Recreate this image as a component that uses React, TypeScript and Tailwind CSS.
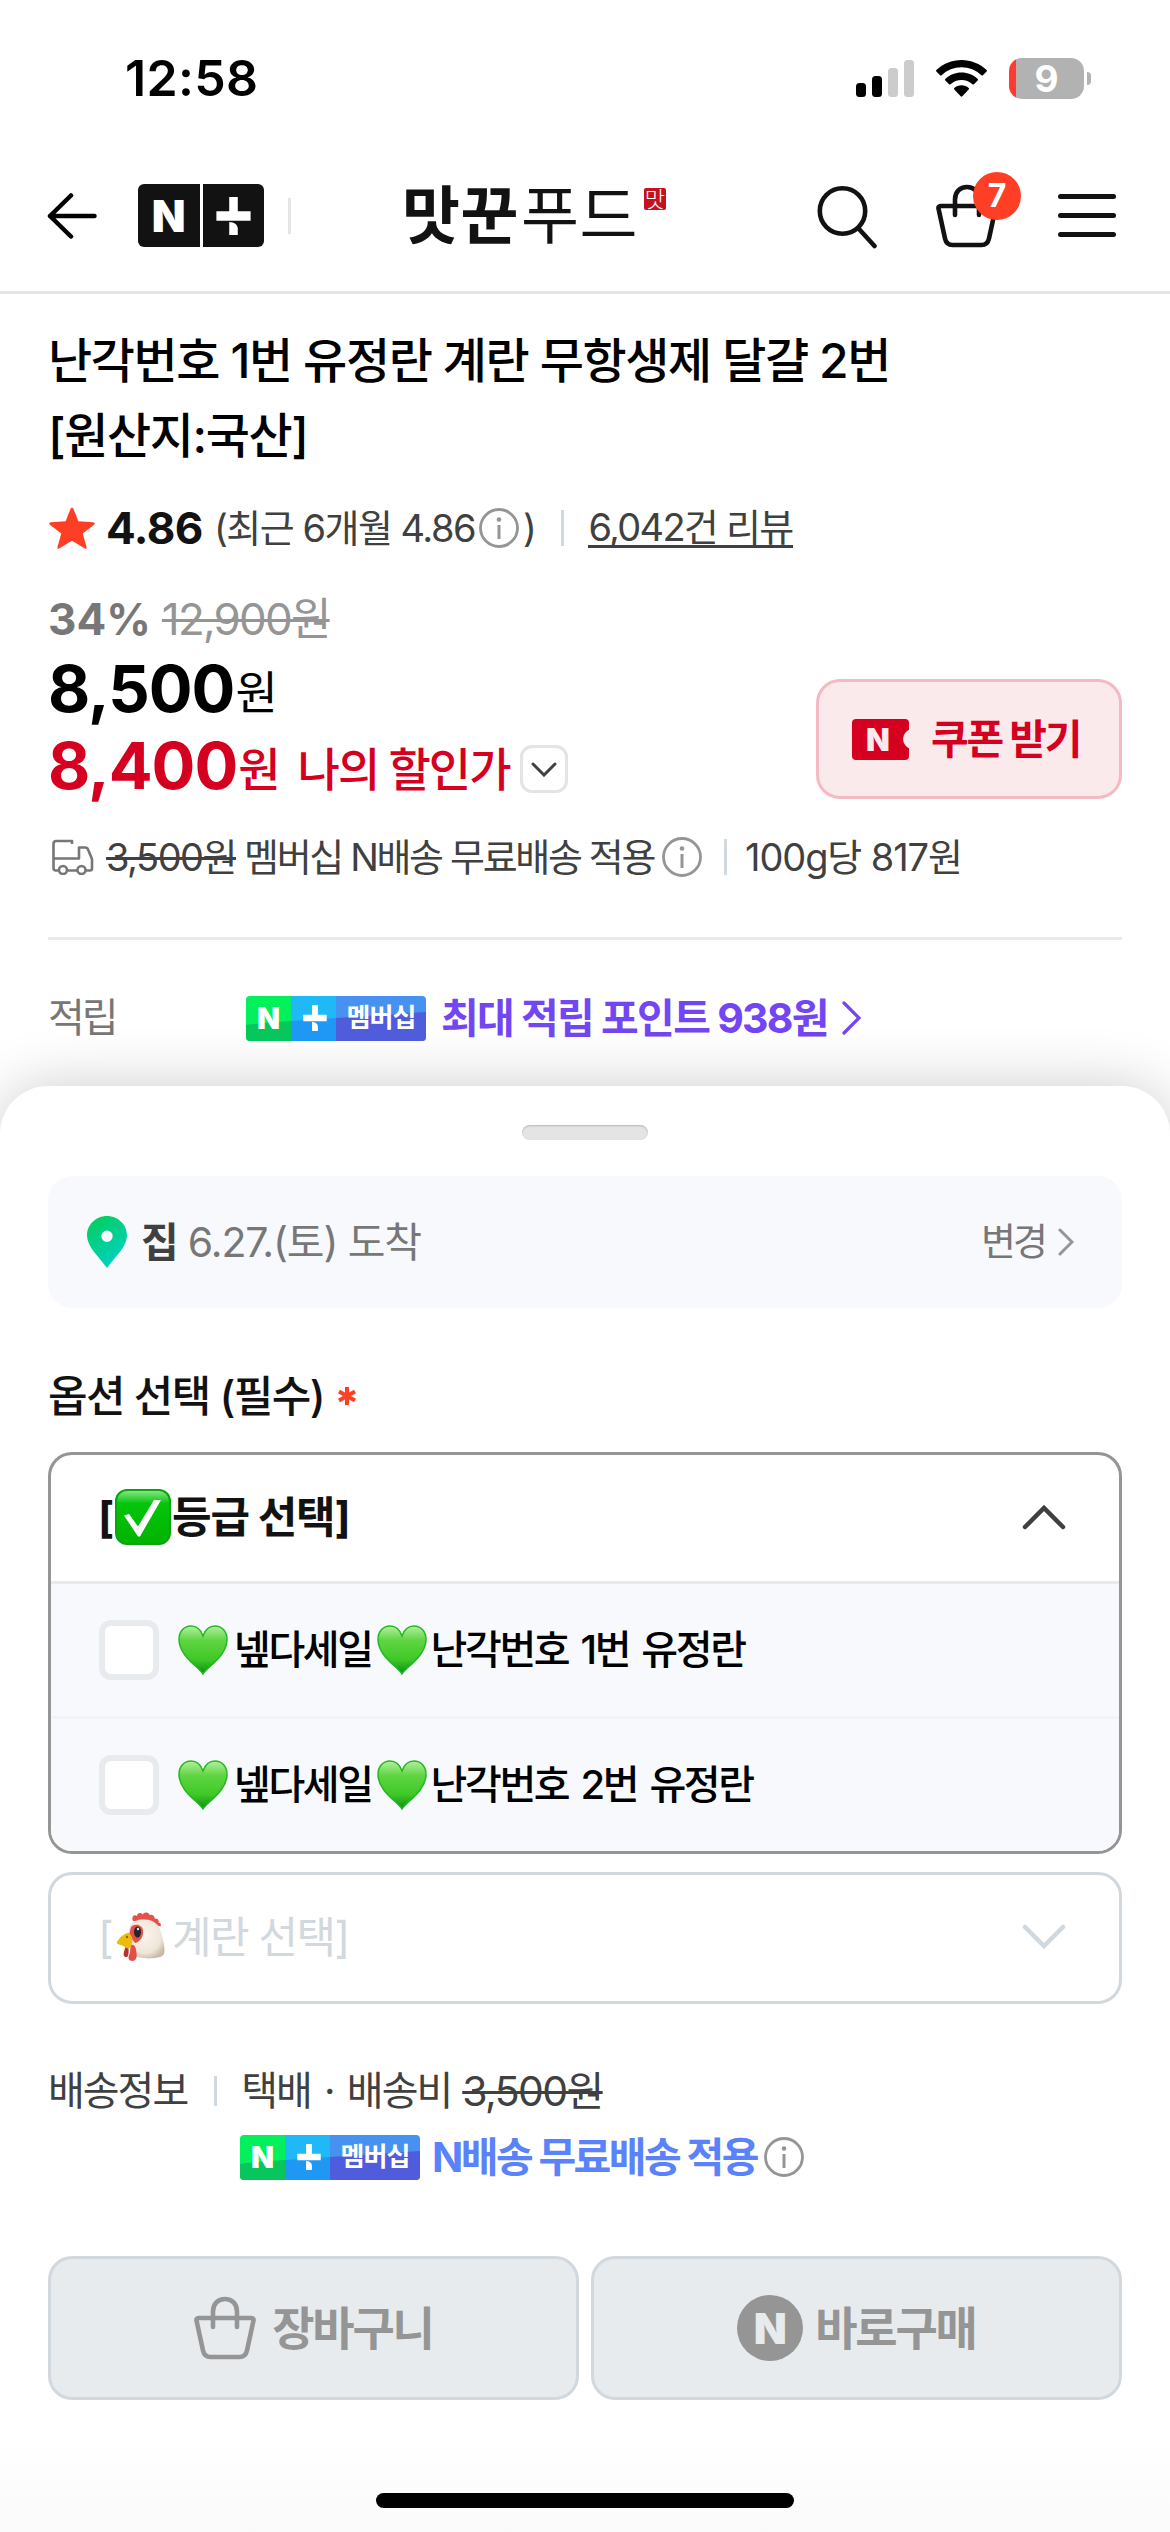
import React from 'react';

const InfoIcon = ({ className = '' }: { className?: string }) => (
  <svg viewBox="0 0 40 40" fill="none" className={`h-10 w-10 shrink-0 ${className}`}>
    <circle cx="20" cy="20" r="18.5" stroke="#959595" strokeWidth="2.8" />
    <circle cx="20" cy="11.5" r="2.3" fill="#959595" />
    <path d="M20 17v14" stroke="#959595" strokeWidth="3" />
  </svg>
);

const PlusMark = ({ className = '' }: { className?: string }) => (
  <svg viewBox="0 0 36 40" fill="#fff" className={className}>
    <path d="M13.5 0h9v15H36v10H0V15h13.5z" />
    <path d="M13.5 26.300c5 .2 8.600 2.300 9 6.700v7h-9z" />
  </svg>
);

const BagIcon = ({ className = '' }: { className?: string }) => (
  <svg viewBox="0 0 62 64" fill="none" stroke="currentColor" strokeWidth="4.600" strokeLinecap="round" strokeLinejoin="round" className={className}>
    <path d="M4.500 22h53a2 2 0 0 1 2 2.500l-6.500 30c-1 4.600-3.500 6.500-7.500 6.500h-29c-4 0-6.500-1.900-7.500-6.500l-6.500-30a2 2 0 0 1 2-2.500z" />
    <path d="M19 31V15.500C19 8 24 3 31 3s12 5 12 12.500V31" />
  </svg>
);

const GreenHeart = () => (
  <svg viewBox="0 0 50 50" className="h-[50px] w-[50px] shrink-0">
    <defs>
      <linearGradient id="heart" x1="0" y1="0" x2="0" y2="1">
        <stop offset="0" stopColor="#b4f09d" />
        <stop offset=".3" stopColor="#5fd543" />
        <stop offset=".7" stopColor="#3fc826" />
        <stop offset="1" stopColor="#0a8f14" />
      </linearGradient>
    </defs>
    <path
      d="M25 49C21 42 1 31 1 14.500 1 6 6.500 1 13 1c6 0 10 4 12 10C27 5 31 1 37 1c6.500 0 12 5 12 13.500C49 31 29 42 25 49z"
      fill="url(#heart)"
      stroke="#22b822"
      strokeWidth="1.500"
    />
  </svg>
);

const CheckEmoji = () => (
  <svg viewBox="0 0 56 56" className="ml-[2px] h-14 w-14 shrink-0">
    <defs>
      <linearGradient id="check" x1="0" y1="0" x2="0" y2="1">
        <stop offset="0" stopColor="#8fe68c" />
        <stop offset=".25" stopColor="#04c50c" />
        <stop offset="1" stopColor="#00b300" />
      </linearGradient>
    </defs>
    <rect x="1" y="1" width="54" height="54" rx="11" fill="url(#check)" stroke="#0aa50f" strokeWidth="2" />
    <path d="M9 26.500l5-1.500 9 12.500L39 11h7L25 47.500h-2z" fill="#fff" />
  </svg>
);

const ChickenEmoji = () => (
  <svg viewBox="0 0 50 50" className="ml-[4px] h-[50px] w-[50px] shrink-0">
    <defs>
      <radialGradient id="hen" cx=".45" cy=".4" r=".65">
        <stop offset="0" stopColor="#fbf5ee" />
        <stop offset=".7" stopColor="#efe6da" />
        <stop offset="1" stopColor="#c9b9a4" />
      </radialGradient>
    </defs>
    <path d="M17 9c-2-4 1-7 4-5 0-3 4-4 5.500-1.500C29-.5 33 0 33.500 3c3-1 5.500 1 5 3.500 3-.5 5 1.500 4 4 2 0 3 2 2 4L30 10z" fill="#e5504b" />
    <path d="M13 17C15 9 21 7.500 28 7.500c12 0 16 7 18 16 2 9 4 17 1 20-4 3.500-25 4.500-29-1-4-5-7-17-5-25.500z" fill="url(#hen)" />
    <path d="M15 15c4-4 11-2 12 3 1 6-3 12-8 13l-6-8z" fill="#e25049" />
    <ellipse cx="21.500" cy="20" rx="3.500" ry="5.500" fill="#23262c" />
    <circle cx="22" cy="17" r="1.200" fill="#dfe6ee" />
    <path d="M11 33c2 0 2.500 11 0 12-3 .5-4-2-3-5s1.500-7 3-7z" fill="#b5322f" />
    <path d="M15 33c4-1 5 3 5.500 8 .8 5-1 8-4 8-4 0-5-3-3-7 1-3 .5-6 1.500-9z" fill="#e25049" />
    <path d="M1 30c2-4 8-10 12-9 3 2 5 8 2 13-1 3-4 3-6 1-4-3-9-2-8-5z" fill="#edbb0b" />
    <circle cx="11" cy="25" r="1.200" fill="#8a6a00" />
  </svg>
);

const MembershipBadge = () => (
  <div className="relative flex h-[45px] w-[180px] shrink-0 overflow-hidden rounded-[4px]">
    <svg viewBox="0 0 180 45" className="absolute inset-0 h-full w-full">
      <path d="M0 0h45v45H0z" fill="#03f05c" />
      <path d="M45 0h45v45H45z" fill="#20b9f7" />
      <path d="M90 0h90v45H90z" fill="#4791f1" />
      <path d="M0 29c15-2 30-3 45-4v20H0z" fill="#06c65c" />
      <path d="M45 25l45-3v23H45z" fill="#1f97f5" />
      <path d="M90 22c30-2 60-4 90-6v29H90z" fill="#4f5cdb" />
    </svg>
    <div className="relative flex w-[45px] items-center justify-center text-[30px] leading-none font-black tracking-normal text-white">N</div>
    <div className="relative flex w-[45px] items-center justify-center">
      <PlusMark className="ml-[2px] h-[26px] w-[26px]" />
    </div>
    <div className="relative flex w-[90px] items-center justify-center text-[26px] leading-none font-bold tracking-[-1px] text-white">멤버십</div>
  </div>
);

const options = ['난각번호 1번 유정란', '난각번호 2번 유정란'];

const StatusBar = () => (
  <div className="flex h-[140px] shrink-0 items-center justify-between pt-4 pr-[79px] pl-[125px]">
    <span className="text-[50px] leading-none font-semibold tracking-[0.3px] text-black">12:58</span>
    <div className="flex items-center">
      <svg viewBox="0 0 58 37" className="h-[37px] w-[58px]">
        <rect y="23" width="10" height="14" rx="3.500" />
        <rect x="16" y="16" width="10" height="21" rx="3.500" />
        <rect x="32" y="8" width="10" height="29" rx="3.500" fill="#ccc" />
        <rect x="48" width="10" height="37" rx="3.500" fill="#ccc" />
      </svg>
      <svg viewBox="0 0 51 37" className="ml-[22px] h-[37px] w-[51px]">
        <path d="M25.500 0C35 0 44 3.700 50.600 10c.5.500.5 1 0 1.500l-3.700 3.800c-.5.500-1 .5-1.500 0C40 10.200 33 7.300 25.500 7.300S11 10.200 5.600 15.300c-.5.500-1 .5-1.500 0L.4 11.500c-.5-.5-.5-1 0-1.500C7 3.700 16 0 25.500 0z" />
        <path d="M25.500 12.600c6.200 0 11.900 2.400 16.200 6.300.5.500.5 1 0 1.500l-3.800 3.800c-.4.500-1 .5-1.400 0-3-2.600-6.800-4.200-11-4.200s-8 1.600-11 4.200c-.4.500-1 .5-1.400 0l-3.800-3.800c-.5-.5-.5-1 0-1.500 4.300-3.900 10-6.300 16.200-6.300z" />
        <path d="M25.500 25.300c2.800 0 5.300 1 7.200 2.600.5.500.5 1 0 1.500l-6.400 6.900c-.5.500-1.100.5-1.600 0l-6.400-6.900c-.5-.5-.5-1 0-1.500 1.900-1.600 4.400-2.600 7.200-2.600z" />
      </svg>
      <div className="ml-[22px] flex h-[41px] w-[75px] items-center justify-center rounded-[13px] bg-[linear-gradient(90deg,#ff3b30_7px,#b2b2b2_7px)]">
        <span className="text-[37px] leading-[41px] font-bold text-white">9</span>
      </div>
      <div className="ml-[3px] h-[13px] w-[4px] rounded-r-full bg-[#b2b2b2]" />
    </div>
  </div>
);

const Header = () => (
  <header className="flex h-[154px] shrink-0 items-center border-b-[3px] border-[#e5e5e5] pr-[54px] pl-[47px]">
    <svg viewBox="0 0 50 46" fill="none" stroke="#000" strokeWidth="4.500" strokeLinecap="round" strokeLinejoin="round" className="h-[46px] w-[50px]">
      <path d="M24 2.500L3 23l21 20.500M3 23h44.500" />
    </svg>
    <div className="ml-[41px] flex h-[63px] w-[126px] gap-[3px] text-white">
      <div className="flex flex-1 items-center justify-center rounded-l-[6px] bg-[#121212] text-[44px] leading-none font-black">N</div>
      <div className="flex flex-1 items-center justify-center rounded-r-[6px] bg-[#121212]">
        <PlusMark className="h-[38px] w-[35px]" />
      </div>
    </div>
    <div className="ml-6 h-9 w-[3px] bg-[#e5e5e5]" />
    <div className="ml-[111px] flex items-center whitespace-nowrap text-[63px] leading-none tracking-[0.5px] text-[#121212]">
      <span className="font-bold">맛꾼</span>
      <span className="ml-[2px] font-normal">푸드</span>
    </div>
    <div className="mb-[33px] ml-[6px] flex h-[22px] w-[22px] items-center justify-center rounded-[2px] bg-[#c4121f] text-[22px] leading-[22px] font-light text-white">
      맛
    </div>
    <div className="ml-auto flex items-center">
      <svg viewBox="0 0 60 68" fill="none" stroke="#121212" strokeWidth="4.600" strokeLinecap="round" className="h-[68px] w-[60px]">
        <circle cx="25.500" cy="29" r="22.700" />
        <path d="M42 47l15.500 17" />
      </svg>
      <div className="relative ml-[59px] h-16 w-[62px] text-[#121212]">
        <BagIcon className="h-16 w-[62px]" />
        <div className="absolute -top-3 left-[37px] flex h-12 w-12 items-center justify-center rounded-full bg-[#ff3e26] text-[32px] leading-none font-bold text-white">7</div>
      </div>
      <div className="ml-[60px] flex w-[58px] flex-col gap-[14px]">
        <div className="h-[5px] rounded-full bg-[#121212]" />
        <div className="h-[5px] rounded-full bg-[#121212]" />
        <div className="h-[5px] rounded-full bg-[#121212]" />
      </div>
    </div>
  </header>
);

const ProductInfo = () => (
  <section className="shrink-0 px-12">
    <h1 className="pt-[29px] text-[48px] leading-[75px] font-medium tracking-[-1.400px] whitespace-nowrap text-black">
      난각번호 1번 유정란 계란 무항생제 달걀 2번
      <br />
      [원산지:국산]
    </h1>

    <div className="mt-[29px] flex h-[52px] items-center text-[38px] leading-none tracking-[-1.500px] whitespace-nowrap text-[#404040]">
      <svg viewBox="0 0 46 42" fill="#ff3e26" className="ml-px h-[46px] w-[46px]">
        <path d="M23 .8c.7 0 1.200.5 1.500 1.200l4.900 12.300 14.800 1c1.600.1 2 1.500.9 2.500L33.700 26.600l3.800 13.200c.4 1.600-.7 2.400-2 1.500L23 33.800l-12.500 7.500c-1.300.9-2.400.1-2-1.500l3.800-13.200L.9 17.800c-1.100-1-.7-2.400.9-2.500l14.800-1L21.500 2c.3-.7.8-1.200 1.500-1.200z" />
      </svg>
      <span className="ml-[11px] text-[44px] font-bold tracking-[-0.500px] text-[#121212]">4.86</span>
      <span className="ml-[11px]">(최근 6개월 4.86</span>
      <InfoIcon className="ml-[4px]" />
      <span className="ml-[4px]">)</span>
      <div className="ml-[26px] h-9 w-[3px] bg-[#d1d8de]" />
      <a className="ml-6 border-b-[3px] border-[#404040] leading-[36px] tracking-[-1.700px]">6,042건 리뷰</a>
    </div>

    <div className="flex justify-between">
      <div>
        <div className="mt-[39px] flex h-[52px] items-center text-[44px] leading-none whitespace-nowrap">
          <span className="font-bold text-[#777]">34%</span>
          <span className="ml-[11px] tracking-[-1.800px] text-[#959595] line-through decoration-[3px]">12,900원</span>
        </div>
        <div className="mt-[10px] flex h-[68px] items-baseline whitespace-nowrap text-black">
          <span className="text-[65px] leading-[68px] font-bold tracking-[-1px]">8,500</span>
          <span className="ml-px -translate-y-[3px] text-[46px] leading-none">원</span>
        </div>
        <div className="mt-[9px] flex h-[68px] items-baseline whitespace-nowrap text-[#d5001f]">
          <span className="text-[65px] leading-[68px] font-bold tracking-[-1px]">8,400</span>
          <span className="ml-px -translate-y-[3px] text-[46px] leading-none font-medium">원</span>
          <span className="ml-[17px] -translate-y-[3px] text-[46px] leading-none font-medium tracking-[-2px]">나의 할인가</span>
          <div className="mt-[6px] ml-[11px] flex h-12 w-12 items-center justify-center self-center rounded-[12px] border-[3px] border-[#e4e4e4]">
            <svg viewBox="0 0 26 15" fill="none" stroke="#404040" strokeWidth="3" strokeLinecap="round" className="h-[15px] w-[26px]">
              <path d="M2 2l11 11L24 2" />
            </svg>
          </div>
        </div>
      </div>
      <div className="mt-[125px] flex h-[120px] w-[306px] items-center rounded-[24px] border-[3px] border-[#f5b9c3] bg-[#fbeaec] pl-[33px] text-[#d5001f]">
        <div className="relative flex h-[41px] w-[57px] items-center overflow-hidden rounded-[4px] bg-[#d5001f] pl-[14px] text-[31px] leading-none font-black text-[#fbeaec]">
          N
          <div className="absolute top-[10px] -right-[14px] h-5 w-5 rounded-full bg-[#fbeaec]" />
        </div>
        <span className="ml-[22px] text-[41px] leading-none font-bold tracking-[-2.300px] whitespace-nowrap">쿠폰 받기</span>
      </div>
    </div>

    <div className="mt-[31px] flex h-[52px] items-center text-[38px] leading-none tracking-[-1.500px] whitespace-nowrap text-[#404040]">
      <svg viewBox="0 0 42 36" fill="none" stroke="#777" strokeWidth="2.600" strokeLinejoin="round" className="ml-[4px] h-[36px] w-[42px]">
        <path d="M20 5V2H4a2.500 2.500 0 0 0-2.500 2.500V29a2.500 2.500 0 0 0 2.500 2.500h3M15 31.500h10M34 31.500h4a2 2 0 0 0 2-2V20l-4-9.500a3 3 0 0 0-3-2h-6V19.500H1.500" />
        <circle cx="11" cy="31" r="4" />
        <circle cx="29.500" cy="31" r="4" />
      </svg>
      <span className="ml-[12px] line-through decoration-[3px]">3,500원</span>
      <span className="ml-2 tracking-[-2.350px]">멤버십 N배송 무료배송 적용</span>
      <InfoIcon className="ml-[8px]" />
      <div className="ml-[22px] h-9 w-[3px] bg-[#d1d8de]" />
      <span className="ml-[18px] tracking-[-1.100px]">100g당 817원</span>
    </div>

    <div className="mt-[54px] h-[3px] bg-[#e8ebee]" />

    <div className="mt-[50px] flex h-[56px] items-center text-[41px] leading-none tracking-[-1.700px] whitespace-nowrap">
      <span className="w-[198px] text-[40px] tracking-[-3px] text-[#777]">적립</span>
      <MembershipBadge />
      <span className="ml-[15px] font-bold text-[#7346f3]">최대 적립 포인트 938원</span>
      <svg viewBox="0 0 20 36" fill="none" stroke="#7346f3" strokeWidth="3.200" strokeLinecap="round" className="ml-[14px] h-9 w-5">
        <path d="M2 3l15 15L2 33" />
      </svg>
    </div>
  </section>
);

const OptionSheet = () => (
  <section className="mt-10 flex flex-1 flex-col rounded-t-[48px] bg-white px-12 shadow-[0_0_60px_rgba(0,0,0,0.2)]">
    <div className="mx-auto mt-[39px] h-[15px] w-[126px] rounded-full bg-[#e4e4e4] shadow-[inset_0_1px_2px_rgba(0,0,0,0.2)]" />

    <div className="mt-9 flex h-[132px] items-center rounded-[24px] bg-[#f7f9fd] pr-12 pl-[39px] leading-none whitespace-nowrap text-[#777]">
      <svg viewBox="0 0 40 52" className="h-[52px] w-10">
        <defs>
          <linearGradient id="pin" x1=".2" y1="0" x2=".7" y2="1">
            <stop offset="0" stopColor="#03cf5d" />
            <stop offset="1" stopColor="#00d1c7" />
          </linearGradient>
        </defs>
        <path fillRule="evenodd" d="M20 0c11 0 20 8.500 20 19.500C40 31 27 42 20 52 13 42 0 31 0 19.500 0 8.500 9 0 20 0zm0 14.500a5.700 5.700 0 1 0 0 11.400 5.700 5.700 0 0 0 0-11.400z" fill="url(#pin)" />
      </svg>
      <span className="ml-[14px] text-[41px] font-bold text-[#404040]">집</span>
      <span className="ml-[9px] text-[41px] tracking-[-1.100px]">6.27.(토) 도착</span>
      <span className="ml-auto pb-[2px] text-[38px] tracking-[-3px]">변경</span>
      <svg viewBox="0 0 16 28" fill="none" stroke="#959595" strokeWidth="3" strokeLinecap="round" className="ml-[13px] h-7 w-4">
        <path d="M2 2l12 12L2 26" />
      </svg>
    </div>

    <div className="mt-[60px] flex h-[56px] items-center text-[43px] leading-none font-medium tracking-[-1.600px] whitespace-nowrap text-[#121212]">
      옵션 선택 (필수)
      <svg viewBox="0 0 18 18" stroke="#ff3e26" strokeWidth="4" className="ml-[14px] h-[18px] w-[18px]">
        <path d="M9 0v18M1 4.500l16 9M17 4.500l-16 9" />
      </svg>
    </div>

    <div className="mt-[28px] h-[402px] overflow-hidden rounded-[24px] border-[3px] border-[#959595]">
      <div className="flex h-[129px] items-center border-b-[3px] border-[#e8ebee] pr-[53px] pb-[2px] pl-[47px] text-[43px] leading-none font-bold tracking-[-1.200px] whitespace-nowrap text-[#121212]">
        <span>[</span>
        <CheckEmoji />
        <span className="ml-px">등급 선택]</span>
        <svg viewBox="0 0 44 26" fill="none" stroke="#404040" strokeWidth="4.500" strokeLinecap="round" className="ml-auto h-[26px] w-11">
          <path d="M3 23L22 4l19 19" />
        </svg>
      </div>
      {options.map((option) => (
        <label
          key={option}
          className="flex h-[135px] items-center border-b-[3px] border-[#f0f3f7] bg-[#f7f9fd] pl-[48px] text-[40px] leading-none font-medium tracking-[-2.400px] whitespace-nowrap text-black last:h-[132px] last:border-b-0"
        >
          <span className="mr-[19px] h-[60px] w-[60px] rounded-[12px] border-[6px] border-[#e8ebee] bg-white" />
          <GreenHeart />
          <span className="mr-[5px] ml-[6px]">넾다세일</span>
          <GreenHeart />
          <span className="ml-[4px] [word-spacing:4px]">{option}</span>
        </label>
      ))}
    </div>

    <div className="mt-[18px] flex h-[132px] items-center rounded-[24px] border-[3px] border-[#d1d8de] pr-[53px] pb-[2px] pl-[47px] text-[43px] leading-none tracking-[-1.600px] whitespace-nowrap text-[#d1d8de]">
      <span>[</span>
      <ChickenEmoji />
      <span className="ml-[6px]">계란 선택]</span>
      <svg viewBox="0 0 44 26" fill="none" stroke="#d1d8de" strokeWidth="4.500" strokeLinecap="round" className="ml-auto h-[26px] w-11">
        <path d="M3 3l19 19L41 3" />
      </svg>
    </div>

    <div className="mt-[61px] flex h-[52px] items-center text-[40px] leading-none tracking-[-2px] whitespace-nowrap text-[#404040]">
      <span>배송정보</span>
      <div className="ml-[27px] h-[30px] w-[3px] bg-[#d1d8de]" />
      <span className="ml-[24px] [word-spacing:4px]">택배 · 배송비</span>
      <span className="ml-[11px] text-[41px] tracking-[-1.600px] line-through decoration-[3px]">3,500원</span>
    </div>
    <div className="mt-[14px] flex h-[52px] items-center pl-48 text-[41px] leading-none font-bold tracking-[-2.500px] whitespace-nowrap text-[#5a82fb]">
      <MembershipBadge />
      <span className="ml-[12px]">N배송 무료배송 적용</span>
      <InfoIcon className="ml-[7px]" />
    </div>

    <div className="mt-[73px] flex gap-3 text-[46px] leading-none font-bold tracking-[-2.200px] whitespace-nowrap text-[#959595]">
      <button className="flex h-[144px] flex-1 items-center justify-center rounded-[24px] border-[3px] border-[#d1d8de] bg-[#e8ebee]">
        <BagIcon className="mr-[16px] h-16 w-[62px]" />
        장바구니
      </button>
      <button className="flex h-[144px] flex-1 items-center justify-center rounded-[24px] border-[3px] border-[#d1d8de] bg-[#e8ebee]">
        <span className="mr-[12px] flex h-[66px] w-[66px] items-center justify-center rounded-full bg-[#959595] text-[43px] font-black tracking-normal text-[#e8ebee]">N</span>
        바로구매
      </button>
    </div>

    <div className="-mx-12 mt-auto flex h-[132px] items-end justify-center bg-linear-to-b from-white from-30% to-[#fafafa] pb-6">
      <div className="h-[15px] w-[418px] rounded-full bg-black" />
    </div>
  </section>
);

const App = () => {
  return (
    <div className="flex h-[2532px] w-[1170px] flex-col overflow-hidden bg-white font-[Inter,'Noto_Sans_CJK_KR',sans-serif]">
      <StatusBar />
      <Header />
      <ProductInfo />
      <OptionSheet />
    </div>
  );
};

export default App;
